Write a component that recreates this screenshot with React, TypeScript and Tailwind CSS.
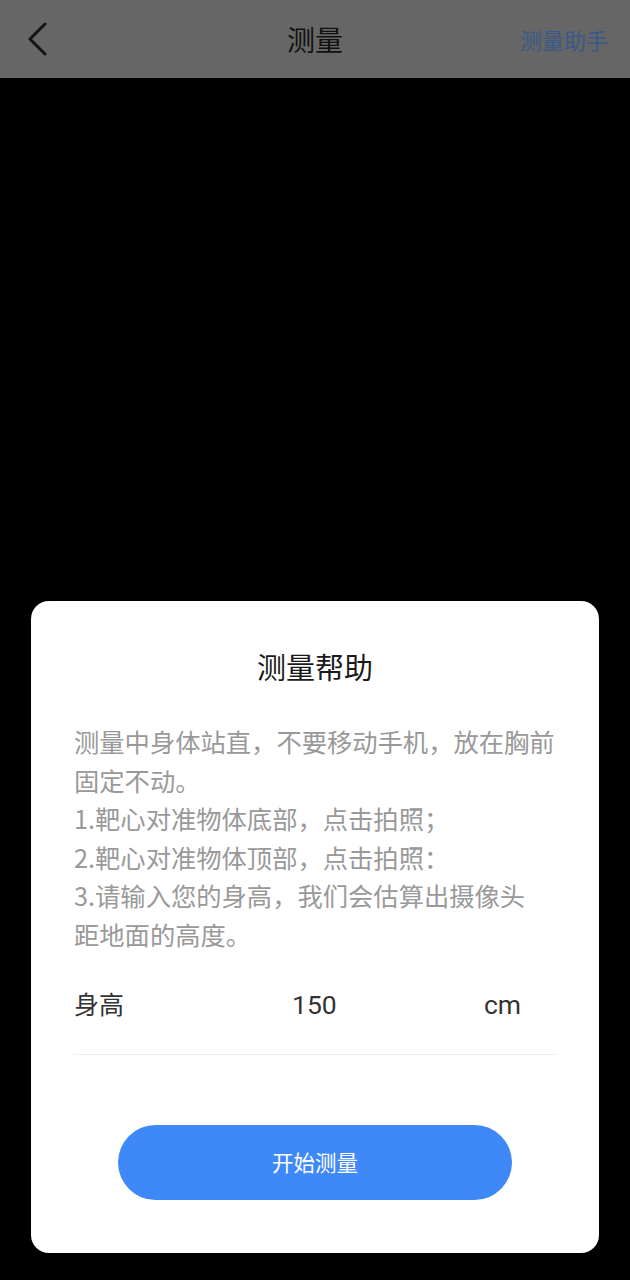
import React from "react";

const font = { fontFamily: '"Noto Sans CJK SC", "Noto Sans", Roboto, sans-serif' };
const latin = { fontFamily: 'Roboto, "Noto Sans", "Noto Sans CJK SC", sans-serif' };

export default function App() {
  return (
    <div className="w-[630px] h-[1280px] bg-black flex flex-col" style={font}>
      <div className="h-[78px] bg-[#666666] flex items-center shrink-0">
        <div className="w-[120px] flex items-center pl-[26px]">
          <svg width="22" height="34" viewBox="0 0 22 34" fill="none">
            <path d="M19 2 L4 17 L19 32" stroke="#141414" strokeWidth="3" strokeLinecap="round" strokeLinejoin="round" />
          </svg>
        </div>
        <div className="flex-1 text-center text-[28px] text-[#111111] leading-none">测量</div>
        <div className="w-[120px] text-right pr-[22px] text-[22px] text-[#38598a] leading-none">测量助手</div>
      </div>
      <div className="flex-1 flex flex-col justify-end pb-[27px] px-[31px]">
        <div className="bg-white rounded-[18px] h-[652px] flex flex-col">
          <div className="pt-[45px] text-center text-[29px] leading-[40px] text-[#1a1a1a]">测量帮助</div>
          <div className="mt-[36px] px-[43px] text-[25.3px] leading-[38.5px] text-[#999999] whitespace-nowrap">
            <div>测量中身体站直，不要移动手机，放在胸前</div>
            <div>固定不动。</div>
            <div>1.靶心对准物体底部，点击拍照；</div>
            <div>2.靶心对准物体顶部，点击拍照：</div>
            <div>3.请输入您的身高，我们会估算出摄像头</div>
            <div>距地面的高度。</div>
          </div>
          <div className="mx-[42px] mt-[24px] h-[78px] border-b border-[#eeeeee] flex items-baseline pt-[2px] text-[#333333] leading-[48px]">
            <div className="w-[219px] pl-[1px] text-[25px]">身高</div>
            <div className="flex-1 text-[26.5px]" style={latin}>150</div>
            <div className="pr-[36px] text-[26.5px]" style={latin}>cm</div>
          </div>
          <div className="flex justify-center mt-[70px]">
            <div className="w-[394px] h-[75px] rounded-full bg-[#3f88f7] flex items-center justify-center text-white text-[21.5px]">
              开始测量
            </div>
          </div>
        </div>
      </div>
    </div>
  );
}
